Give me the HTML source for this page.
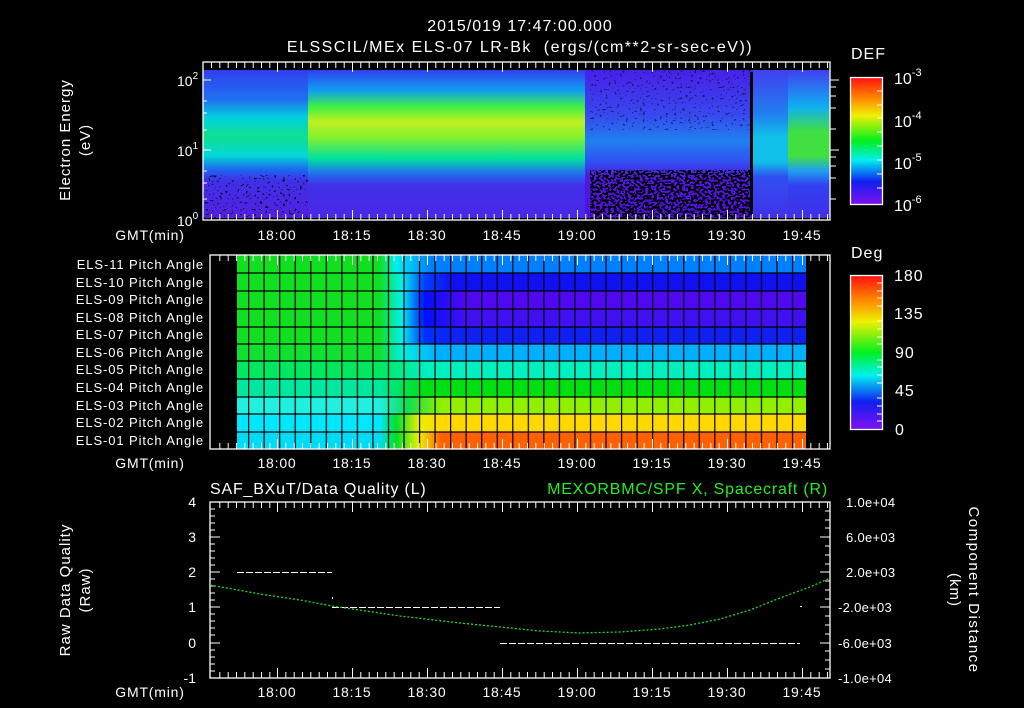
<!DOCTYPE html>
<html><head><meta charset="utf-8"><style>
html,body{margin:0;padding:0;background:#000;}
svg{display:block;font-family:"Liberation Sans",sans-serif;}
</style></head><body>
<svg width="1024" height="708" viewBox="0 0 1024 708" xmlns="http://www.w3.org/2000/svg">
<defs>
<linearGradient id="rb" x1="0" y1="0" x2="0" y2="1">
<stop offset="0" stop-color="#ff1010"/><stop offset="0.15" stop-color="#ff8000"/><stop offset="0.3" stop-color="#f0f000"/><stop offset="0.5" stop-color="#00f020"/><stop offset="0.65" stop-color="#00f0f0"/><stop offset="0.82" stop-color="#1020f0"/><stop offset="1" stop-color="#8010f0"/>
</linearGradient>
<linearGradient id="sA" x1="0" y1="70" x2="0" y2="218" gradientUnits="userSpaceOnUse">
<stop offset="0" stop-color="#3040f0"/><stop offset="0.2" stop-color="#2070f0"/><stop offset="0.32" stop-color="#00d0e0"/><stop offset="0.45" stop-color="#10e090"/><stop offset="0.58" stop-color="#00d8d8"/><stop offset="0.68" stop-color="#2060f0"/><stop offset="0.75" stop-color="#4030e8"/><stop offset="1" stop-color="#5020e0"/>
</linearGradient>
<linearGradient id="sB" x1="0" y1="70" x2="0" y2="218" gradientUnits="userSpaceOnUse">
<stop offset="0" stop-color="#3040f0"/><stop offset="0.14" stop-color="#10a0f0"/><stop offset="0.25" stop-color="#40f040"/><stop offset="0.35" stop-color="#c0f020"/><stop offset="0.46" stop-color="#80f030"/><stop offset="0.6" stop-color="#00e0a0"/><stop offset="0.7" stop-color="#2070f0"/><stop offset="0.78" stop-color="#4030e8"/><stop offset="1" stop-color="#4828e8"/>
</linearGradient>
<linearGradient id="sC" x1="0" y1="70" x2="0" y2="218" gradientUnits="userSpaceOnUse">
<stop offset="0" stop-color="#4820e8"/><stop offset="0.3" stop-color="#3848f0"/><stop offset="0.48" stop-color="#2080f0"/><stop offset="0.62" stop-color="#3050f0"/><stop offset="0.72" stop-color="#5018e0"/><stop offset="1" stop-color="#5010e0"/>
</linearGradient>
<linearGradient id="sD" x1="0" y1="70" x2="0" y2="218" gradientUnits="userSpaceOnUse">
<stop offset="0" stop-color="#4040f0"/><stop offset="0.25" stop-color="#10b0f0"/><stop offset="0.42" stop-color="#40e040"/><stop offset="0.58" stop-color="#40e040"/><stop offset="0.68" stop-color="#20a0f0"/><stop offset="0.78" stop-color="#3040f0"/><stop offset="1" stop-color="#4030e8"/>
</linearGradient>
<linearGradient id="sE" x1="0" y1="70" x2="0" y2="218" gradientUnits="userSpaceOnUse">
<stop offset="0" stop-color="#4040f0"/><stop offset="0.3" stop-color="#2080f0"/><stop offset="0.45" stop-color="#10c0e8"/><stop offset="0.62" stop-color="#10c0e8"/><stop offset="0.72" stop-color="#3050f0"/><stop offset="1" stop-color="#4030e8"/>
</linearGradient>
<filter id="speck" x="0" y="0" width="100%" height="100%">
<feTurbulence type="fractalNoise" baseFrequency="0.35 0.45" numOctaves="1" seed="3"/>
<feComponentTransfer><feFuncA type="discrete" tableValues="0 0 0 1 1 1"/></feComponentTransfer>
<feColorMatrix type="matrix" values="0 0 0 0 0  0 0 0 0 0  0 0 0 0 0  0 0 0 1 0"/>
</filter>
<filter id="speck2" x="0" y="0" width="100%" height="100%">
<feTurbulence type="fractalNoise" baseFrequency="0.35 0.45" numOctaves="1" seed="5"/>
<feComponentTransfer><feFuncA type="discrete" tableValues="0 0 0 0 1 1"/></feComponentTransfer>
<feColorMatrix type="matrix" values="0 0 0 0 0  0 0 0 0 0  0 0 0 0 0  0 0 0 1 0"/>
</filter>
<pattern id="grid" x="248" y="0" width="15.54" height="708" patternUnits="userSpaceOnUse">
<rect x="0" y="0" width="1.2" height="708" fill="#000"/>
</pattern>
</defs>

<text x="520" y="31" fill="#fff" font-size="16" letter-spacing="1" text-anchor="middle">2015/019 17:47:00.000</text>
<text x="520" y="52" fill="#fff" font-size="16" letter-spacing="1.5" text-anchor="middle" xml:space="preserve">ELSSCIL/MEx ELS-07 LR-Bk  (ergs/(cm**2-sr-sec-eV))</text>

<g>
<rect x="203" y="70" width="110" height="148" fill="url(#sA)"/>
<rect x="308" y="70" width="284" height="148" fill="url(#sB)"/>
<rect x="585" y="70" width="170" height="148" fill="url(#sC)"/>
<rect x="753" y="70" width="37" height="148" fill="url(#sE)"/>
<rect x="788" y="70" width="42" height="148" fill="url(#sD)"/>
<rect x="203" y="175" width="105" height="43" filter="url(#speck2)" opacity="0.8"/>
<rect x="590" y="170" width="160" height="48" filter="url(#speck)"/>
<rect x="590" y="70" width="160" height="60" filter="url(#speck2)" opacity="0.5"/>
<rect x="750" y="72" width="3" height="143" fill="#000"/>
</g>
<rect x="203" y="62" width="627" height="158" fill="none" stroke="#fff" stroke-width="1.3"/>
<g id="xt1" stroke="#fff" stroke-width="1">
<path d="M211.5 62v6M219.8 62v6M228.2 62v6M236.5 62v6M244.8 62v6M253.2 62v6M261.5 62v6M269.8 62v6M277.5 62v10M285.8 62v6M294.2 62v6M302.5 62v6M310.8 62v6M319.2 62v6M327.5 62v6M335.8 62v6M344.2 62v6M352.5 62v10M360.8 62v6M369.2 62v6M377.5 62v6M385.8 62v6M394.2 62v6M402.5 62v6M410.8 62v6M419.2 62v6M427.5 62v10M435.8 62v6M444.2 62v6M452.5 62v6M460.8 62v6M469.2 62v6M477.5 62v6M485.8 62v6M494.2 62v6M502.5 62v10M510.8 62v6M519.2 62v6M527.5 62v6M535.8 62v6M544.2 62v6M552.5 62v6M560.8 62v6M569.2 62v6M577.5 62v10M585.8 62v6M594.2 62v6M602.5 62v6M610.8 62v6M619.2 62v6M627.5 62v6M635.8 62v6M644.2 62v6M652.5 62v10M660.8 62v6M669.2 62v6M677.5 62v6M685.8 62v6M694.2 62v6M702.5 62v6M710.8 62v6M719.2 62v6M727.5 62v10M735.8 62v6M744.2 62v6M752.5 62v6M760.8 62v6M769.2 62v6M777.5 62v6M785.8 62v6M794.2 62v6M802.5 62v10M810.8 62v6M819.2 62v6M827.5 62v6"/>
</g>
<use href="#xt1" transform="translate(0,282) scale(1,-1)"/>
<g stroke="#fff" stroke-width="1">
<path d="M203 80h8M203 101h4M203 113h4M203 130h4M203 150h8M203 171h4M203 183h4M203 199h4M830 80h9M830 87h6M830 96h6M830 108h6M830 129h6M830 150h9M830 157h6M830 166h6M830 178h6M830 199h6"/>
</g>
<g fill="#fff" font-size="14">
<text x="177" y="86">10<tspan font-size="10" dy="-7">2</tspan></text>
<text x="177" y="156">10<tspan font-size="10" dy="-7">1</tspan></text>
<text x="177" y="226">10<tspan font-size="10" dy="-7">0</tspan></text>
</g>
<text transform="translate(70,140) rotate(-90)" fill="#fff" font-size="15" letter-spacing="1" text-anchor="middle">Electron Energy</text>
<text transform="translate(90,140) rotate(-90)" fill="#fff" font-size="15" letter-spacing="1" text-anchor="middle">(eV)</text>
<g fill="#fff" font-size="14" letter-spacing="0.8" text-anchor="middle">
<text x="150" y="240">GMT(min)</text>
<text x="277" y="240">18:00</text><text x="352" y="240">18:15</text><text x="427" y="240">18:30</text><text x="502" y="240">18:45</text><text x="577" y="240">19:00</text><text x="652" y="240">19:15</text><text x="727" y="240">19:30</text><text x="802" y="240">19:45</text>
</g>
<text x="851" y="59" fill="#fff" font-size="16" letter-spacing="1">DEF</text>
<rect x="850.5" y="77.5" width="32" height="127" fill="url(#rb)" stroke="#fff" stroke-width="1.3"/>
<g stroke="#fff"><path d="M877 91h5M877 105h5M877 118h5M877 132h5M877 146h5M877 160h5M877 174h5M877 188h5"/></g>
<g fill="#fff" font-size="16">
<text x="894" y="84">10<tspan font-size="11" dy="-8">-3</tspan></text>
<text x="894" y="127">10<tspan font-size="11" dy="-8">-4</tspan></text>
<text x="894" y="169">10<tspan font-size="11" dy="-8">-5</tspan></text>
<text x="894" y="211">10<tspan font-size="11" dy="-8">-6</tspan></text>
</g>

<defs>
<linearGradient id="r1" x1="237" x2="806" gradientUnits="userSpaceOnUse"><stop offset="0.25" stop-color="#10e020"/><stop offset="0.28" stop-color="#00f0f0"/><stop offset="0.34" stop-color="#0080ff"/></linearGradient>
<linearGradient id="r2" x1="237" x2="806" gradientUnits="userSpaceOnUse"><stop offset="0.25" stop-color="#10e020"/><stop offset="0.29" stop-color="#00f0f0"/><stop offset="0.33" stop-color="#0040ff"/><stop offset="0.38" stop-color="#1010f0"/></linearGradient>
<linearGradient id="r3" x1="237" x2="806" gradientUnits="userSpaceOnUse"><stop offset="0.25" stop-color="#10e020"/><stop offset="0.29" stop-color="#00f0f0"/><stop offset="0.33" stop-color="#0010ff"/><stop offset="0.4" stop-color="#5008f0"/></linearGradient>
<linearGradient id="r4" x1="237" x2="806" gradientUnits="userSpaceOnUse"><stop offset="0.25" stop-color="#10e020"/><stop offset="0.29" stop-color="#00f0f0"/><stop offset="0.33" stop-color="#0010ff"/><stop offset="0.4" stop-color="#4010f0"/></linearGradient>
<linearGradient id="r5" x1="237" x2="806" gradientUnits="userSpaceOnUse"><stop offset="0.25" stop-color="#10e020"/><stop offset="0.29" stop-color="#00f0f0"/><stop offset="0.33" stop-color="#0030ff"/><stop offset="0.4" stop-color="#1020f0"/></linearGradient>
<linearGradient id="r6" x1="237" x2="806" gradientUnits="userSpaceOnUse"><stop offset="0.25" stop-color="#10e030"/><stop offset="0.29" stop-color="#00f0e0"/><stop offset="0.35" stop-color="#00b0ff"/></linearGradient>
<linearGradient id="r7" x1="237" x2="806" gradientUnits="userSpaceOnUse"><stop offset="0.25" stop-color="#00e860"/><stop offset="0.33" stop-color="#00f0c0"/></linearGradient>
<linearGradient id="r8" x1="237" x2="806" gradientUnits="userSpaceOnUse"><stop offset="0.25" stop-color="#00e8a0"/><stop offset="0.33" stop-color="#00e010"/></linearGradient>
<linearGradient id="r9" x1="237" x2="806" gradientUnits="userSpaceOnUse"><stop offset="0.25" stop-color="#20f0e0"/><stop offset="0.3" stop-color="#10e050"/><stop offset="0.36" stop-color="#90f000"/></linearGradient>
<linearGradient id="r10" x1="237" x2="806" gradientUnits="userSpaceOnUse"><stop offset="0.25" stop-color="#00e8ff"/><stop offset="0.28" stop-color="#00e030"/><stop offset="0.32" stop-color="#e8f000"/><stop offset="0.36" stop-color="#ffd800"/></linearGradient>
<linearGradient id="r11" x1="237" x2="806" gradientUnits="userSpaceOnUse"><stop offset="0.25" stop-color="#00dcf8"/><stop offset="0.28" stop-color="#00e020"/><stop offset="0.32" stop-color="#f0f000"/><stop offset="0.36" stop-color="#ff6000"/></linearGradient>
</defs>
<g>
<rect x="237" y="255" width="569" height="18" fill="url(#r1)"/>
<rect x="237" y="273" width="569" height="18" fill="url(#r2)"/>
<rect x="237" y="291" width="569" height="18" fill="url(#r3)"/>
<rect x="237" y="309" width="569" height="18" fill="url(#r4)"/>
<rect x="237" y="327" width="569" height="17" fill="url(#r5)"/>
<rect x="237" y="344" width="569" height="17" fill="url(#r6)"/>
<rect x="237" y="361" width="569" height="18" fill="url(#r7)"/>
<rect x="237" y="379" width="569" height="18" fill="url(#r8)"/>
<rect x="237" y="397" width="569" height="17" fill="url(#r9)"/>
<rect x="237" y="414" width="569" height="18" fill="url(#r10)"/>
<rect x="237" y="432" width="569" height="17" fill="url(#r11)"/>
<rect x="237" y="255" width="569" height="194" fill="url(#grid)"/>
<g stroke="#000" stroke-width="1.2"><path d="M237 273h569M237 291h569M237 309h569M237 327h569M237 344h569M237 361h569M237 379h569M237 397h569M237 414h569M237 432h569"/></g>
</g>
<rect x="210" y="255" width="620" height="194" fill="none" stroke="#fff" stroke-width="1.3"/>
<g id="xt2" stroke="#fff" stroke-width="1">
<path d="M219.8 255v6M228.2 255v6M236.5 255v6M244.8 255v6M253.2 255v6M261.5 255v6M269.8 255v6M277.5 255v10M285.8 255v6M294.2 255v6M302.5 255v6M310.8 255v6M319.2 255v6M327.5 255v6M335.8 255v6M344.2 255v6M352.5 255v10M360.8 255v6M369.2 255v6M377.5 255v6M385.8 255v6M394.2 255v6M402.5 255v6M410.8 255v6M419.2 255v6M427.5 255v10M435.8 255v6M444.2 255v6M452.5 255v6M460.8 255v6M469.2 255v6M477.5 255v6M485.8 255v6M494.2 255v6M502.5 255v10M510.8 255v6M519.2 255v6M527.5 255v6M535.8 255v6M544.2 255v6M552.5 255v6M560.8 255v6M569.2 255v6M577.5 255v10M585.8 255v6M594.2 255v6M602.5 255v6M610.8 255v6M619.2 255v6M627.5 255v6M635.8 255v6M644.2 255v6M652.5 255v10M660.8 255v6M669.2 255v6M677.5 255v6M685.8 255v6M694.2 255v6M702.5 255v6M710.8 255v6M719.2 255v6M727.5 255v10M735.8 255v6M744.2 255v6M752.5 255v6M760.8 255v6M769.2 255v6M777.5 255v6M785.8 255v6M794.2 255v6M802.5 255v10M810.8 255v6M819.2 255v6M827.5 255v6"/>
</g>
<use href="#xt2" transform="translate(0,704) scale(1,-1)"/>
<g fill="#fff" font-size="13" letter-spacing="0.9" text-anchor="end">
<text x="204" y="269">ELS-11 Pitch Angle</text>
<text x="204" y="287">ELS-10 Pitch Angle</text>
<text x="204" y="304">ELS-09 Pitch Angle</text>
<text x="204" y="322">ELS-08 Pitch Angle</text>
<text x="204" y="339">ELS-07 Pitch Angle</text>
<text x="204" y="357">ELS-06 Pitch Angle</text>
<text x="204" y="374">ELS-05 Pitch Angle</text>
<text x="204" y="392">ELS-04 Pitch Angle</text>
<text x="204" y="410">ELS-03 Pitch Angle</text>
<text x="204" y="427">ELS-02 Pitch Angle</text>
<text x="204" y="445">ELS-01 Pitch Angle</text>
</g>
<g fill="#fff" font-size="14" letter-spacing="0.8" text-anchor="middle">
<text x="150" y="468">GMT(min)</text>
<text x="277" y="468">18:00</text><text x="352" y="468">18:15</text><text x="427" y="468">18:30</text><text x="502" y="468">18:45</text><text x="577" y="468">19:00</text><text x="652" y="468">19:15</text><text x="727" y="468">19:30</text><text x="802" y="468">19:45</text>
</g>
<text x="851" y="258" fill="#fff" font-size="16" letter-spacing="1">Deg</text>
<rect x="850.5" y="275.5" width="32" height="154" fill="url(#rb)" stroke="#fff" stroke-width="1.3"/>
<g stroke="#fff"><path d="M877 283h5M877 291h5M877 298h5M877 306h5M877 321h5M877 329h5M877 337h5M877 344h5M877 360h5M877 367h5M877 375h5M877 383h5M877 398h5M877 406h5M877 414h5M877 421h5"/></g>
<g fill="#fff" font-size="16" letter-spacing="1">
<text x="894" y="281">180</text><text x="894" y="319">135</text><text x="895" y="358">90</text><text x="895" y="396">45</text><text x="895" y="435">0</text>
</g>

<text x="210" y="494" fill="#fff" font-size="16" letter-spacing="0.8" xml:space="preserve">SAF_BXuT/Data Quality (L)</text>
<text x="828" y="494" fill="#22ee22" font-size="16" letter-spacing="0.8" text-anchor="end">MEXORBMC/SPF X, Spacecraft (R)</text>
<rect x="210" y="502" width="620" height="176" fill="none" stroke="#fff" stroke-width="1.3"/>
<g stroke="#fff" stroke-width="1">
<path d="M219.8 502v6M228.2 502v6M236.5 502v6M244.8 502v6M253.2 502v6M261.5 502v6M269.8 502v6M277.5 502v10M285.8 502v6M294.2 502v6M302.5 502v6M310.8 502v6M319.2 502v6M327.5 502v6M335.8 502v6M344.2 502v6M352.5 502v10M360.8 502v6M369.2 502v6M377.5 502v6M385.8 502v6M394.2 502v6M402.5 502v6M410.8 502v6M419.2 502v6M427.5 502v10M435.8 502v6M444.2 502v6M452.5 502v6M460.8 502v6M469.2 502v6M477.5 502v6M485.8 502v6M494.2 502v6M502.5 502v10M510.8 502v6M519.2 502v6M527.5 502v6M535.8 502v6M544.2 502v6M552.5 502v6M560.8 502v6M569.2 502v6M577.5 502v10M585.8 502v6M594.2 502v6M602.5 502v6M610.8 502v6M619.2 502v6M627.5 502v6M635.8 502v6M644.2 502v6M652.5 502v10M660.8 502v6M669.2 502v6M677.5 502v6M685.8 502v6M694.2 502v6M702.5 502v6M710.8 502v6M719.2 502v6M727.5 502v10M735.8 502v6M744.2 502v6M752.5 502v6M760.8 502v6M769.2 502v6M777.5 502v6M785.8 502v6M794.2 502v6M802.5 502v10M810.8 502v6M819.2 502v6M827.5 502v6"/>
<path d="M219.8 678v-6M228.2 678v-6M236.5 678v-6M244.8 678v-6M253.2 678v-6M261.5 678v-6M269.8 678v-6M277.5 678v-10M285.8 678v-6M294.2 678v-6M302.5 678v-6M310.8 678v-6M319.2 678v-6M327.5 678v-6M335.8 678v-6M344.2 678v-6M352.5 678v-10M360.8 678v-6M369.2 678v-6M377.5 678v-6M385.8 678v-6M394.2 678v-6M402.5 678v-6M410.8 678v-6M419.2 678v-6M427.5 678v-10M435.8 678v-6M444.2 678v-6M452.5 678v-6M460.8 678v-6M469.2 678v-6M477.5 678v-6M485.8 678v-6M494.2 678v-6M502.5 678v-10M510.8 678v-6M519.2 678v-6M527.5 678v-6M535.8 678v-6M544.2 678v-6M552.5 678v-6M560.8 678v-6M569.2 678v-6M577.5 678v-10M585.8 678v-6M594.2 678v-6M602.5 678v-6M610.8 678v-6M619.2 678v-6M627.5 678v-6M635.8 678v-6M644.2 678v-6M652.5 678v-10M660.8 678v-6M669.2 678v-6M677.5 678v-6M685.8 678v-6M694.2 678v-6M702.5 678v-6M710.8 678v-6M719.2 678v-6M727.5 678v-10M735.8 678v-6M744.2 678v-6M752.5 678v-6M760.8 678v-6M769.2 678v-6M777.5 678v-6M785.8 678v-6M794.2 678v-6M802.5 678v-10M810.8 678v-6M819.2 678v-6M827.5 678v-6"/>
<path d="M210 502h10M210 509h5M210 516h5M210 523h5M210 530h5M210 537h10M210 544h5M210 551h5M210 558h5M210 565h5M210 572h10M210 579h5M210 586h5M210 593h5M210 600h5M210 607h10M210 614h5M210 621h5M210 628h5M210 635h5M210 643h10M210 650h5M210 657h5M210 664h5M210 671h5"/>
<path d="M830 502h-10M830 511h-5M830 520h-5M830 528h-5M830 537h-10M830 546h-5M830 555h-5M830 564h-5M830 572h-10M830 581h-5M830 590h-5M830 599h-5M830 607h-10M830 616h-5M830 625h-5M830 634h-5M830 643h-10M830 651h-5M830 660h-5M830 669h-5M830 678h-10"/>
</g>
<g fill="#fff" font-size="14" text-anchor="end">
<text x="196" y="507">4</text><text x="196" y="542">3</text><text x="196" y="577">2</text><text x="196" y="612">1</text><text x="196" y="648">0</text><text x="196" y="683">-1</text>
</g>
<g fill="#fff" font-size="13" letter-spacing="0.3">
<text x="846" y="507">1.0e+04</text><text x="846" y="542">6.0e+03</text><text x="846" y="577">2.0e+03</text><text x="838" y="612">-2.0e+03</text><text x="838" y="648">-6.0e+03</text><text x="838" y="683">-1.0e+04</text>
</g>
<text transform="translate(70,590) rotate(-90)" fill="#fff" font-size="15" letter-spacing="1" text-anchor="middle">Raw Data Quality</text>
<text transform="translate(90,590) rotate(-90)" fill="#fff" font-size="15" letter-spacing="1" text-anchor="middle">(Raw)</text>
<text transform="translate(969,590) rotate(90)" fill="#fff" font-size="15" letter-spacing="1.5" text-anchor="middle">Component Distance</text>
<text transform="translate(950,590) rotate(90)" fill="#fff" font-size="15" letter-spacing="1" text-anchor="middle">(km)</text>
<g stroke="#fff" stroke-width="1" stroke-dasharray="7 2" fill="none">
<path d="M237 572.5H332M332 607.5H500M500 643.5H800"/>
</g>
<rect x="332" y="597" width="1" height="2" fill="#fff"/>
<rect x="800" y="606" width="2" height="1" fill="#fff"/>
<polyline fill="none" stroke="#22dd22" stroke-width="1.3" stroke-dasharray="2 2" points="210,585 260,594 300,600 332,606 400,616 460,623 500,627 540,631 580,633 620,632 660,629 690,625 720,619 750,610 780,598 810,587 830,578"/>
<g fill="#fff" font-size="14" letter-spacing="0.8" text-anchor="middle">
<text x="150" y="697">GMT(min)</text>
<text x="277" y="697">18:00</text><text x="352" y="697">18:15</text><text x="427" y="697">18:30</text><text x="502" y="697">18:45</text><text x="577" y="697">19:00</text><text x="652" y="697">19:15</text><text x="727" y="697">19:30</text><text x="802" y="697">19:45</text>
</g>
</svg>
</body></html>
